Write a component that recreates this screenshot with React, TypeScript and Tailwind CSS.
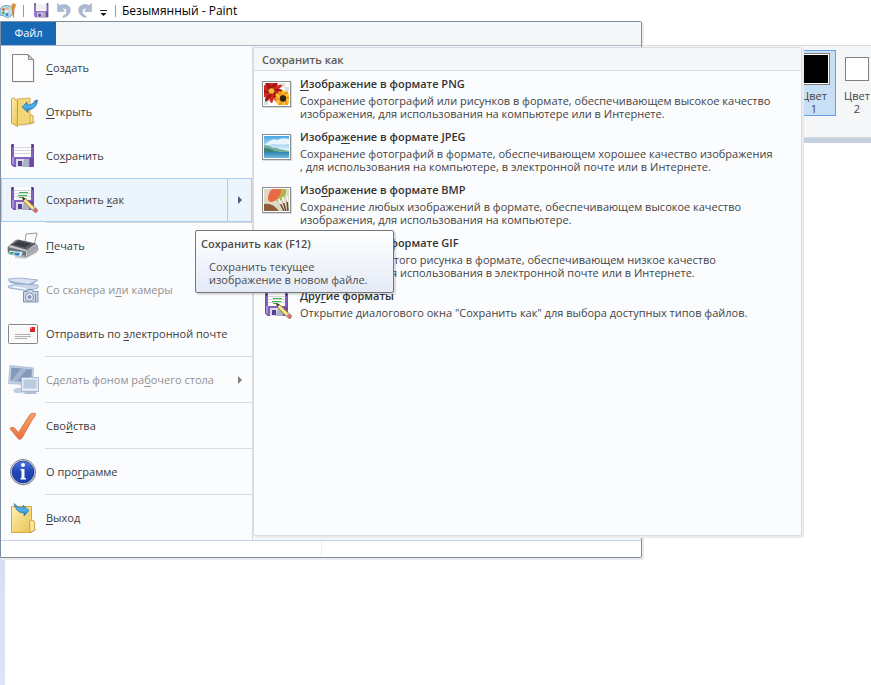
import type { ReactNode } from 'react';

function FloppyArt() {
  return (
    <>
      <path d="M0.5 0.5H22.5V22.5H2.5L0.5 20.5Z" fill="#8560c0" stroke="#7450ae" />
      <path d="M1 13H3V21L1 20Z" fill="#a98fd8" />
      <path d="M19 14H22V22H19Z" fill="#6b45a8" />
      <rect x="3" y="0" width="17" height="13" fill="#fcfcfe" />
      <path d="M3 3.5H20M3 6.5H20M3 9.5H20" stroke="#d5d6dc" />
      <rect x="1" y="1" width="1" height="2" fill="#3c2470" />
      <rect x="21" y="1" width="1" height="2" fill="#3c2470" />
      <rect x="5" y="15" width="13" height="8" fill="#d9dbe6" />
      <path d="M13 15H18V23H11Z" fill="#aeb1c4" />
      <rect x="7" y="17" width="4" height="5" fill="#5b3d92" />
    </>
  );
}

function SaveIcon({ className = 'w-6 h-6' }: { className?: string }) {
  return (
    <svg viewBox="0 0 24 24" className={className}>
      <FloppyArt />
    </svg>
  );
}

function SaveAsIcon() {
  return (
    <svg viewBox="0 0 32 32" className="w-8 h-8">
      <g transform="translate(4 3)">
        <FloppyArt />
        <path d="M8 5.5H17M7 8.5H16M8 10.5H13" stroke="#3fb54a" />
      </g>
      <path d="M16 14L18.5 14.500L28 23.500L25.500 26.500L16 17Z" fill="#f3d671" stroke="#8c7434" strokeWidth="0.8" />
      <path d="M17.500 16L26 24.500" stroke="#fff3b4" />
      <path d="M15 13L18.500 14.500L16.500 17Z" fill="#3b352e" />
      <path d="M26 26.500L28.500 23.500L30.500 26Q30.500 29 28 28.500Z" fill="#d9736a" stroke="#a24a45" strokeWidth="0.6" />
      <path d="M25 26L28 23" stroke="#c8ccd2" strokeWidth="1.5" />
    </svg>
  );
}

function PaintLogo() {
  return (
    <svg viewBox="0 0 16 16" className="w-4 h-4">
      <path d="M0 6C2 2.5 7 1.5 10.5 3.5C14 6 13.5 12 9.5 14C6 15.5 4.5 12.5 2 12.5L0 12Z" fill="#b9dcef" stroke="#5f9cc0" strokeWidth="0.9" />
      <circle cx="3.5" cy="6.5" r="1.4" fill="#e0604c" />
      <circle cx="7.5" cy="5.2" r="1.3" fill="#f0b63c" />
      <circle cx="3.3" cy="10" r="1.4" fill="#5fae4d" />
      <circle cx="7" cy="11.5" r="1.5" fill="#3f7fd0" />
      <circle cx="6.5" cy="8.3" r="1.1" fill="#fff" />
      <path d="M11.5 3L13 0.5L15.5 1.5L15 4.5L13 5.5Z" fill="#e99439" stroke="#b76420" strokeWidth="0.5" />
      <path d="M12 5L14.5 5.2L14 14.5L12.8 14.5Z" fill="#df8131" />
    </svg>
  );
}

function UndoIcon({ className = '' }: { className?: string }) {
  return (
    <svg viewBox="0 0 14 15" className={`w-[14px] h-[15px] ${className}`}>
      <path d="M0.500 0.500L2.800 2.500C7 0.500 12.800 1.500 13.300 6.500C13.500 11 10.500 13.500 6 14.500V13C9 11.500 10 10.500 9.700 8C9.300 5.500 7 5 5.300 5.500L7.500 8.500H0.500Z" fill="#abb9d2" stroke="#97a7c4" strokeWidth="0.5" />
    </svg>
  );
}

function PageIcon() {
  return (
    <svg viewBox="0 0 24 29" className="w-6 h-[29px]">
      <path d="M2 2H18L23.5 7V28.5H2Z" fill="#dfdfdf" />
      <path d="M1.5 0.5H17L22.5 6V27.5H1.5Z" fill="#f9f9f8" stroke="#828282" />
      <path d="M3 2H16V8H21V26H3Z" fill="#fff" opacity="0.7" />
      <path d="M16.5 0.5Q18.500 3 17.500 5.500Q20 4.500 22.5 6L17 0.5Z" fill="#e8e8e8" stroke="#828282" />
    </svg>
  );
}

function OpenIcon() {
  return (
    <svg viewBox="0 0 30 32" className="w-[30px] h-8">
      <defs>
        <linearGradient id="folder" x1="0" y1="0" x2="1" y2="1">
          <stop offset="0" stopColor="#fff0b4" />
          <stop offset="1" stopColor="#eac24f" />
        </linearGradient>
        <linearGradient id="arrow" x1="0" y1="0" x2="0" y2="1">
          <stop offset="0" stopColor="#3a7ebd" />
          <stop offset="0.5" stopColor="#4bb6ee" />
          <stop offset="1" stopColor="#1c78c2" />
        </linearGradient>
      </defs>
      <path d="M22 24L28 26Q24 30 10 30Z" fill="#d8d8da" />
      <path d="M9 3L22 2V18L25 20V27L9 29Z" fill="#f3d777" stroke="#d0a641" strokeWidth="0.8" />
      <path d="M22 19Q25 18 25 21V26L22 27Z" fill="#f8e496" stroke="#c99e3c" strokeWidth="0.8" />
      <path d="M3.5 3L5 1.5L9.5 5V30.5L3.5 27Z" fill="url(#folder)" stroke="#c99e3c" />
      <path d="M14 11L19 6V9Q25 9 27 4.5L29.5 4Q29 13 20 14V16.5Z" fill="url(#arrow)" stroke="#2468a5" strokeWidth="0.6" />
    </svg>
  );
}

function PrintIcon() {
  return (
    <svg viewBox="0 0 32 28" className="w-8 h-7">
      <path d="M8 22L31 17L30 21L18 27L8 26Z" fill="#d2d3d6" />
      <path d="M18 10L19 2L30 1L27 14L19 15Z" fill="#fafafa" stroke="#909296" strokeWidth="0.9" />
      <path d="M1 15L9 8L30 13L31 18L19 25L1 20Z" fill="#c7c9cd" stroke="#6c6f75" strokeWidth="0.7" />
      <path d="M3 13L11 7.5L29 11.5L20 18Z" fill="#5c5f65" />
      <path d="M6 12.5L12 9L24 12L18 15.5Z" fill="#393c41" />
      <path d="M20 18L30 12.5V17L20 23Z" fill="#a3a6ab" />
      <path d="M1 15L19 19.5V24L1 19.5Z" fill="#6d7077" />
      <path d="M3 18.5L16 20L14 24.5L1 21.5Z" fill="#e8f4fb" stroke="#5a94b8" strokeWidth="0.6" />
      <path d="M3 20L7 20L6 22.5L2 21.5Z" fill="#41a85c" />
      <path d="M8 20.5L13 21L12 23.5L7 22.5Z" fill="#327ac5" />
    </svg>
  );
}

function ScannerIcon() {
  return (
    <svg viewBox="0 0 32 26" className="w-8 h-[26px]">
      <path d="M1 2L13 1L31 3L21 8L2 4Z" fill="#d8e2f2" stroke="#8fa4c5" strokeWidth="0.8" />
      <path d="M2 4L21 7L31 3.500L22 10L3 6Z" fill="#9db1cf" />
      <path d="M1 9L12 7L31 8V11L22 14L2 11Z" fill="#cad7ea" stroke="#8fa4c5" strokeWidth="0.8" />
      <path d="M6 9.5L19 12" stroke="#f6f9fd" strokeWidth="1.5" />
      <path d="M16.5 14.5L20 14.5L21 12.5H25L26 14.5H31V25H16.5Z" fill="#cad6e8" stroke="#7289ad" strokeWidth="0.9" />
      <circle cx="22.5" cy="20" r="4" fill="#edf2f9" stroke="#7c90b0" />
      <circle cx="22.5" cy="20" r="2" fill="#8195b6" />
      <path d="M28.5 17V24" stroke="#7b8fb1" />
    </svg>
  );
}

function MailIcon() {
  return (
    <svg viewBox="0 0 32 22" className="w-8 h-[22px]">
      <rect x="1.5" y="1.5" width="29" height="19" rx="1" fill="#fafafa" stroke="#85868a" />
      <rect x="2.5" y="2.5" width="27" height="17" fill="none" stroke="#fff" />
      <rect x="23" y="4" width="5" height="5" fill="#dd242d" />
      <rect x="23" y="4" width="2" height="2" fill="#f0787c" />
      <path d="M8 11.5H24M8 13.5H24M8 15.5H20" stroke="#aeb0b3" />
    </svg>
  );
}

function DesktopIcon() {
  return (
    <svg viewBox="0 0 32 30" className="w-8 h-[30px]">
      <path d="M6 25Q11 21 16 24V28H8Z" fill="#c1cfe3" />
      <path d="M3 0.5L26.5 3L25.5 20L1.5 18.5Z" fill="#c4d1e5" stroke="#a3b3cf" strokeWidth="0.7" />
      <path d="M4.5 2.5L25 4.5L24 17.5L3.5 16Z" fill="#8498bc" />
      <path d="M14 3.5L20 4L10 16.5L4 16Z" fill="#a5b5d1" />
      <path d="M14.5 12.5H31.5V26.5H14.5Z" fill="#e3ebf6" stroke="#a9b9d3" />
      <path d="M16.5 14.5H29.5V23.5H16.5Z" fill="#bccae0" />
      <path d="M18 27H29L30 29H16Z" fill="#b0c1da" />
    </svg>
  );
}

function CheckIcon() {
  return (
    <svg viewBox="0 0 30 30" className="w-[30px] h-[30px]">
      <defs>
        <linearGradient id="check" x1="0" y1="0" x2="0" y2="1">
          <stop offset="0" stopColor="#f9a267" />
          <stop offset="1" stopColor="#ec7040" />
        </linearGradient>
      </defs>
      <path d="M2 17.5Q2 16 6 16.5L10.5 21.5L22 3.5Q24 1.5 27.5 2.5Q28 4 24 9L14 27Q11.5 29.5 10 27.5Z" fill="url(#check)" stroke="#d06b3c" strokeWidth="0.8" />
    </svg>
  );
}

function InfoIcon() {
  return (
    <svg viewBox="0 0 28 28" className="w-7 h-7">
      <defs>
        <linearGradient id="info" x1="0" y1="0" x2="0" y2="1">
          <stop offset="0" stopColor="#5077df" />
          <stop offset="0.5" stopColor="#2045b8" />
          <stop offset="1" stopColor="#1c3db0" />
        </linearGradient>
      </defs>
      <circle cx="14.5" cy="15" r="12.5" fill="#c9cacd" />
      <circle cx="14" cy="14" r="12.5" fill="#f4f4f4" stroke="#77797d" />
      <circle cx="14" cy="14" r="11" fill="url(#info)" stroke="#15318e" strokeWidth="0.7" />
      <circle cx="14" cy="7" r="2" fill="#fff" />
      <path d="M11.500 11H15.5V20H17V21.500H11.500V20H12.5V12.500H11.500Z" fill="#fff" />
    </svg>
  );
}

function ExitIcon() {
  return (
    <svg viewBox="0 0 28 32" className="w-7 h-8">
      <path d="M22 27L27.5 27.5L22 31Z" fill="#a9aaac" />
      <path d="M2.5 4.5H22.5V30.5H2.5Z" fill="url(#folder)" stroke="#d4a93f" />
      <path d="M20.5 19Q25 17 25.5 20V28L21 30.5Z" fill="#f9e7a0" stroke="#c99e3c" strokeWidth="0.9" />
      <path d="M5 1.5Q9 6 14 6L14 3L20 8.5L15 14V11Q7 11 5 1.5Z" fill="url(#arrow)" stroke="#2468a5" strokeWidth="0.6" />
    </svg>
  );
}

function PictureFrame({ children }: { children: ReactNode }) {
  return (
    <svg viewBox="0 0 30 27" className="w-[30px] h-[27px]">
      <rect x="1" y="1" width="29" height="26" fill="#d9dadc" />
      <rect x="0.5" y="0.5" width="28" height="25" fill="#fff" stroke="#8b8e92" />
      <svg x="2" y="2" width="25" height="22" viewBox="0 0 25 22">
        {children}
      </svg>
    </svg>
  );
}

const petals = [0, 30, 60, 90, 120, 150, 180, 210, 240, 270, 300, 330];

function PngIcon() {
  return (
    <PictureFrame>
      <rect width="25" height="22" fill="#fdfdfd" />
      <path d="M17 0H21V4H17ZM21 4H25V8H21ZM0 18H4V22H0ZM4 14H8V18H4Z" fill="#dcdfd8" />
      {petals.map((a) => (
        <ellipse key={a} cx="7.5" cy="3" rx="2.2" ry="7" fill={a % 60 ? '#a51514' : '#cf2a21'} transform={`rotate(${a} 7.5 8)`} />
      ))}
      <circle cx="7.5" cy="8" r="2.8" fill="#e6c22d" />
      {petals.map((a) => (
        <ellipse key={a} cx="19" cy="11" rx="2" ry="4" fill={a % 60 ? '#ef9a1d' : '#fbc436'} transform={`rotate(${a} 19 15.5)`} />
      ))}
      <circle cx="19" cy="15.5" r="3.2" fill="#32200e" />
    </PictureFrame>
  );
}

function JpegIcon() {
  return (
    <PictureFrame>
      <defs>
        <linearGradient id="sky" x1="0" y1="0" x2="0" y2="1">
          <stop offset="0" stopColor="#4aa5e6" />
          <stop offset="0.6" stopColor="#d9effa" />
        </linearGradient>
        <linearGradient id="sea" x1="0" y1="0" x2="0" y2="1">
          <stop offset="0" stopColor="#2e82ac" />
          <stop offset="1" stopColor="#6fb8e2" />
        </linearGradient>
      </defs>
      <rect width="25" height="22" fill="url(#sky)" />
      <path d="M4 6Q9 2 13 4Q18 1 25 3V8Q15 9 10 8Q6 9 0 10Z" fill="#f2fafe" opacity="0.9" />
      <path d="M0 9Q5 9 9 12Q12 11 15 13L25 15V17H0Z" fill="#6fae98" />
      <path d="M0 12Q6 12 10 15L16 16H0Z" fill="#3f8378" />
      <rect y="16" width="25" height="6" fill="url(#sea)" />
    </PictureFrame>
  );
}

function BmpIcon() {
  return (
    <PictureFrame>
      <rect width="25" height="22" fill="#ddd9c5" />
      <path d="M4 8Q6 0 9 0H18Q17 10 8 13Q3 13 4 8Z" fill="#e86a43" />
      <path d="M18 0H22Q23 9 14 13L12 11Q18 7 18 0Z" fill="#a9b83f" />
      <path d="M0 15Q8 13 15 22H0Z" fill="#8d5c3a" />
      <path d="M16 14L20 22M19 12L22 22M23 11L24 22" stroke="#6d4534" strokeWidth="1.5" />
      <path d="M14.5 10L17 15M18.5 8L20 14M23 7L23.5 13" stroke="#f5efe7" strokeWidth="2" />
    </PictureFrame>
  );
}

// "&" marks the access key
function Label({ text }: { text: string }) {
  const i = text.indexOf('&');
  if (i < 0) return <>{text}</>;
  return (
    <>
      {text.slice(0, i)}
      <span className="underline underline-offset-2">{text[i + 1]}</span>
      {text.slice(i + 2)}
    </>
  );
}

interface MenuRow {
  label: string;
  icon: ReactNode;
  disabled?: boolean;
  active?: boolean;
  arrow?: boolean;
  divider?: boolean;
}

const menuRows: MenuRow[] = [
  { label: '&Создать', icon: <PageIcon /> },
  { label: '&Открыть', icon: <OpenIcon /> },
  { label: 'Со&хранить', icon: <SaveIcon /> },
  { label: 'Сохранить &как', icon: <SaveAsIcon />, active: true, arrow: true, divider: true },
  { label: '&Печать', icon: <PrintIcon /> },
  { label: 'Со сканера и&ли камеры', icon: <ScannerIcon />, disabled: true },
  { label: 'Отправить по &электронной почте', icon: <MailIcon />, divider: true },
  { label: 'Сделать фоном ра&бочего стола', icon: <DesktopIcon />, disabled: true, arrow: true, divider: true },
  { label: 'Сво&йства', icon: <CheckIcon />, divider: true },
  { label: 'О про&грамме', icon: <InfoIcon />, divider: true },
  { label: '&Выход', icon: <ExitIcon /> },
];

const formats = [
  {
    title: '&Изображение в формате PNG',
    icon: <PngIcon />,
    lines: ['Сохранение фотографий или рисунков в формате, обеспечивающем высокое качество', 'изображения, для использования на компьютере или в Интернете.'],
  },
  {
    title: 'Изобра&жение в формате JPEG',
    icon: <JpegIcon />,
    lines: ['Сохранение фотографий в формате, обеспечивающем хорошее качество изображения', ', для использования на компьютере, в электронной почте или в Интернете.'],
  },
  {
    title: 'Изо&бражение в формате BMP',
    icon: <BmpIcon />,
    lines: ['Сохранение любых изображений в формате, обеспечивающем высокое качество', 'изображения, для использования на компьютере.'],
  },
  {
    title: 'Изображение в формате GIF',
    icon: <PngIcon />,
    lines: ['Сохранение простого рисунка в формате, обеспечивающем низкое качество', 'изображения, для использования в электронной почте или в Интернете.'],
  },
  {
    title: 'Дру&гие форматы',
    icon: <SaveAsIcon />,
    lines: ['Открытие диалогового окна "Сохранить как" для выбора доступных типов файлов.'],
  },
];

function TitleBar() {
  return (
    <header className="h-[21px] flex items-center bg-white text-black">
      <PaintLogo />
      <div className="w-px h-3 ml-[7px] mr-2.5 bg-[#999]" />
      <button aria-label="Сохранить">
        <SaveIcon className="w-[15px] h-[15px]" />
      </button>
      <button aria-label="Отменить" className="ml-2">
        <UndoIcon />
      </button>
      <button aria-label="Повторить" className="ml-[7px]">
        <UndoIcon className="-scale-x-100" />
      </button>
      <button aria-label="Настройка панели быстрого доступа" className="ml-2">
        <svg viewBox="0 0 7 6" className="w-[7px] h-1.5 mt-1">
          <path d="M0 0.5H7" stroke="#222" />
          <path d="M0.5 3H6.5L3.5 6Z" fill="#111" />
        </svg>
      </button>
      <div className="w-px h-3 ml-2 mr-1.5 bg-[#999]" />
      <h1 className="text-[12px]">Безымянный - Paint</h1>
    </header>
  );
}

function Ribbon() {
  return (
    <div className="h-[93px] flex justify-end items-start pt-1 bg-[#f5f6f7] border-y border-[#dadbdc]">
      <button className="w-11 h-[66px] pt-0.5 flex flex-col items-center bg-[#c9dff6] border border-[#62a2e4]">
        <span className="w-8 h-8 p-px border border-[#808080] bg-white">
          <span className="block w-full h-full bg-black" />
        </span>
        <span className="mt-1 leading-[13px]">Цвет<br />1</span>
      </button>
      <button className="w-7 h-[66px] ml-[7px] pt-[7px] flex flex-col items-center">
        <span className="w-6 h-6 border border-[#808080] bg-white" />
        <span className="mt-2 leading-[13px]">Цвет<br />2</span>
      </button>
    </div>
  );
}

function MenuItem({ row }: { row: MenuRow }) {
  return (
    <li>
      <button
        disabled={row.disabled}
        className={`w-full h-11 flex items-center text-left border ${row.active ? 'bg-[#ecf4fc] border-[#a5cdf5]' : 'border-transparent'} ${row.disabled ? 'text-[#919191]' : 'text-[#3b3b3b]'}`}
      >
        <span className="w-[42px] mr-0.5 flex justify-center">{row.icon}</span>
        <span className="flex-1 whitespace-nowrap"><Label text={row.label} /></span>
        {row.arrow && (
          <span className={`w-6 self-stretch flex items-center justify-center border-l ${row.active ? 'border-[#a5cdf5] text-[#435c83]' : 'border-transparent text-[#7d7d7d]'}`}>
            <svg viewBox="0 0 4 8" className="w-1 h-2">
              <path d="M0 0L4 4L0 8Z" fill="currentColor" />
            </svg>
          </span>
        )}
      </button>
      {row.divider && <div className="h-0.5 ml-11 border-t border-[#dadbdc]" />}
    </li>
  );
}

function SavePanel() {
  return (
    <section className="absolute left-[252px] top-[25px] bottom-[21px] w-[549px] rounded-xs border border-[#dadbdc] bg-[#fbfcfe] shadow-[2px_2px_0_#ebebec]">
      <h2 className="h-[23px] px-2 leading-[23px] font-semibold text-[#5b5b5b] bg-[#f5f6f7] border-b border-[#dadbdc]">Сохранить как</h2>
      <ul className="pt-1">
        {formats.map((f) => (
          <li key={f.title}>
            <button className="w-full h-[53px] flex items-start text-left">
              <span className="w-[46px] h-[38px] flex items-center justify-center">{f.icon}</span>
              <span className="flex-1 whitespace-nowrap">
                <span className="block h-[19px] leading-[18px] font-semibold text-[#333]"><Label text={f.title} /></span>
                {f.lines.map((line) => (
                  <span key={line} className="block leading-[13px]">{line}</span>
                ))}
              </span>
            </button>
          </li>
        ))}
      </ul>
    </section>
  );
}

function Tooltip() {
  return (
    <div role="tooltip" className="absolute left-[194px] top-[208px] w-[199px] px-[5px] pt-1.5 pb-1.5 leading-[13px] rounded-xs border border-[#767676] bg-linear-to-b from-white to-[#e4ebf7] text-[#4c4c4c] shadow-[2px_2px_1px_#0002]">
      <p className="font-semibold">Сохранить как (F12)</p>
      <p className="mt-2.5 pl-2">Сохранить текущее<br />изображение в новом файле.</p>
    </div>
  );
}

function FileMenu() {
  return (
    <div className="absolute left-0 top-[21px] w-[642px] border border-[#7f8e9f] rounded-r-xs bg-white shadow-[2px_2px_0_#ebebec]">
      <div className="flex bg-[#f5f6f7] border-b border-[#a9b7d0]">
        <button className="w-[55px] h-[23px] bg-[#1769b5] text-white">Файл</button>
      </div>
      <div className="bg-[#f5f6f7] border-b border-[#c6d3e8]">
        <ul className="w-[252px] bg-[#fbfcfe] border-r border-[#dadbdc]">
          {menuRows.map((row) => (
            <MenuItem key={row.label} row={row} />
          ))}
        </ul>
      </div>
      <div className="h-4 flex justify-center">
        <div className="w-px bg-[#eef0f2]" />
      </div>
      <SavePanel />
      <Tooltip />
    </div>
  );
}

export default function App() {
  return (
    <div className="relative min-h-screen flex flex-col overflow-hidden bg-white font-['Open_Sans','Noto_Sans',sans-serif] text-[11px] text-[#444]">
      <TitleBar />
      <div className="h-6 bg-white" />
      <Ribbon />
      <main className="flex-1 flex pt-[5px] pl-[5px] bg-linear-to-b from-[#c5cfe0] to-[#dbe5f3]">
        <div className="flex-1 bg-white" />
      </main>
      <FileMenu />
    </div>
  );
}
